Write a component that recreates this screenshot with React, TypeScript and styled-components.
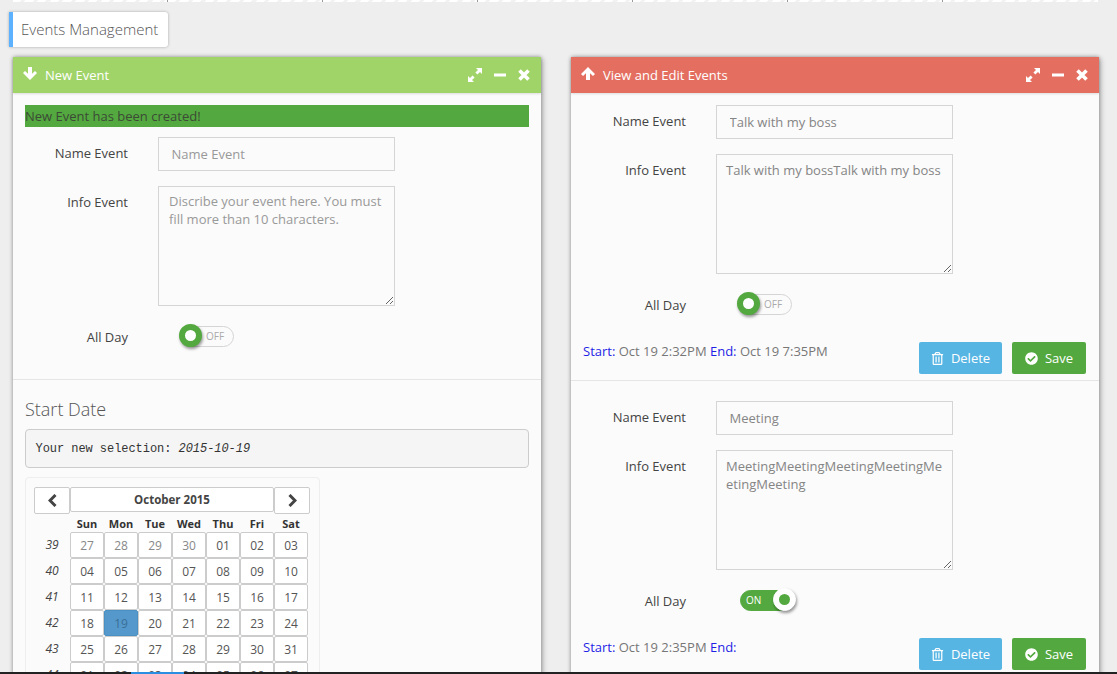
import React from "react";
import styled, { createGlobalStyle } from "styled-components";
import { FaCheckCircle, FaRegTrashAlt } from "react-icons/fa";

const GlobalStyle = createGlobalStyle`
  html, body {
    margin: 0;
    height: 100%;
    overflow: hidden;
    background: #eeeeee;
    font-family: "Open Sans", "Liberation Sans", sans-serif;
    font-size: 13px;
    color: #444444;
  }
  * {
    box-sizing: border-box;
  }
`;

const Page = styled.div`
  height: 674px;
  overflow: hidden;
  position: relative;
`;

const TopStrip = styled.div`
  display: flex;
  height: 2px;
  margin-left: 13px;
`;

const StripTab = styled.div`
  width: 155px;
  background: repeating-linear-gradient(135deg, #ffffff 0 6px, #f2f2f2 6px 9px);
  border-right: 1px solid #999999;
  &:last-child {
    border-right: none;
  }
`;

const Heading = styled.div`
  margin: 10px 0 10px 9px;
  width: 159px;
  height: 35px;
  background: #ffffff;
  border-left: 4px solid #5db2ff;
  border-radius: 0 3px 3px 0;
  box-shadow: 0 0 3px rgba(0, 0, 0, 0.3);
  padding-left: 8px;
  font-size: 15px;
  font-weight: 300;
  line-height: 35px;
  color: #555555;
`;

const Columns = styled.div`
  display: flex;
  gap: 30px;
  padding-left: 13px;
`;

const Panel = styled.section`
  width: 528px;
  height: 700px;
  background: #fbfbfb;
  box-shadow: 0 0 4px rgba(0, 0, 0, 0.35), 2px 2px 6px rgba(0, 0, 0, 0.2);
`;

const PanelHeader = styled.header<{ $color: string }>`
  height: 36px;
  background: ${(p) => p.$color};
  color: #ffffff;
  display: flex;
  align-items: center;
  padding: 0 11px 0 10px;
  font-size: 13px;
  font-weight: 400;
  box-shadow: 0 1px 2px rgba(0, 0, 0, 0.12);
`;

const HeaderIcon = styled.span`
  display: flex;
  width: 22px;
  margin-top: -3px;
`;

const HeaderTitle = styled.span`
  flex: 1;
`;

const HeaderTools = styled.div`
  display: flex;
  align-items: center;
  gap: 12px;
  svg {
    display: block;
  }
`;

const Alert = styled.div`
  margin: 12px 12px 10px;
  height: 22px;
  background: #53a93f;
  color: #3c4a36;
  line-height: 23px;
`;

const FormBlock = styled.div<{ $top?: number; $bottom?: number }>`
  padding-top: ${(p) => p.$top ?? 0}px;
  padding-bottom: ${(p) => p.$bottom ?? 0}px;
  border-bottom: 1px solid #e5e5e5;
`;

const Row = styled.div<{ $mb?: number }>`
  display: flex;
  margin-bottom: ${(p) => p.$mb ?? 15}px;
`;

const Label = styled.label<{ $pt?: number }>`
  width: 115px;
  padding-top: ${(p) => p.$pt ?? 7}px;
  text-align: right;
  line-height: 18px;
  color: #444444;
  flex-shrink: 0;
`;

const Control = styled.div<{ $ml?: number }>`
  margin-left: ${(p) => p.$ml ?? 30}px;
`;

const TextInput = styled.input`
  display: block;
  width: 237px;
  height: 34px;
  border: 1px solid #d5d5d5;
  background: #fbfbfb;
  padding: 0 12.5px;
  font: 13px "Open Sans", sans-serif;
  color: #858585;
  outline: none;
  &::placeholder {
    color: #999999;
    opacity: 1;
  }
`;

const TextArea = styled.textarea`
  display: block;
  width: 237px;
  height: 120px;
  border: 1px solid #d5d5d5;
  background: #fbfbfb;
  padding: 6px 9px;
  font: 13px/18px "Open Sans", sans-serif;
  color: #858585;
  outline: none;
  &:placeholder-shown {
    padding: 5px 8px 6px 10px;
  }
  &::placeholder {
    color: #999999;
    opacity: 1;
  }
`;

const Toggle = styled.div<{ $on?: boolean }>`
  position: relative;
  width: 52px;
  height: 21px;
  margin-top: 1px;
  border-radius: 11px;
  border: 1px solid ${(p) => (p.$on ? "#53a93f" : "#d5d5d5")};
  background: ${(p) => (p.$on ? "#53a93f" : "#fbfbfb")};
  color: ${(p) => (p.$on ? "#ffffff" : "#aaaaaa")};
  font-size: 10px;
  line-height: 19px;
  padding-left: ${(p) => (p.$on ? 5 : 23)}px;
`;

const Knob = styled.span<{ $on?: boolean }>`
  position: absolute;
  top: -3px;
  left: ${(p) => (p.$on ? 32 : -4)}px;
  width: 23px;
  height: 23px;
  border-radius: 50%;
  background: #ffffff;
  border: ${(p) => (p.$on ? "1px solid #ffffff" : "6px solid #53a93f")};
  box-shadow: 1px 2px 3px rgba(0, 0, 0, 0.4);
  &::after {
    content: "";
    display: ${(p) => (p.$on ? "block" : "none")};
    width: 11px;
    height: 11px;
    margin: 5px;
    border-radius: 50%;
    background: #53a93f;
  }
`;

const Footer = styled.div`
  display: flex;
  align-items: flex-start;
  justify-content: space-between;
  padding: 0 13px 0 12px;
`;

const Times = styled.div`
  line-height: 18px;
  color: #777777;
  font-size: 13px;
  b {
    font-weight: 400;
    color: #1f1fe6;
  }
`;

const Actions = styled.div`
  display: flex;
  gap: 10px;
`;

const ActionButton = styled.button<{ $color: string; $w: number }>`
  display: flex;
  align-items: center;
  justify-content: center;
  gap: 7px;
  width: ${(p) => p.$w}px;
  height: 32px;
  border: none;
  border-radius: 2px;
  background: ${(p) => p.$color};
  color: #ffffff;
  font: 13px "Open Sans", sans-serif;
  svg {
    font-size: 13px;
  }
`;

const DateSection = styled.div`
  padding: 18px 12px 0;
`;

const DateTitle = styled.h4`
  margin: 0 0 9px;
  font-size: 18px;
  font-weight: 300;
  line-height: 22px;
  color: #555555;
`;

const Selection = styled.pre`
  margin: 0 0 9px;
  height: 39px;
  padding: 0 9.5px;
  border: 1px solid #cccccc;
  border-radius: 4px;
  background: #f5f5f5;
  font: 12px/39px "Liberation Mono", monospace;
  letter-spacing: -0.05px;
  color: #333333;
`;

const Calendar = styled.div`
  width: 295px;
  height: 220px;
  padding: 9px 8px;
  border: 1px solid #eeeeee;
  border-radius: 4px;
`;

const CalendarGrid = styled.div`
  display: grid;
  grid-template-columns: 36px repeat(7, 34px);
  grid-template-rows: 16px;
  grid-auto-rows: 26px;
`;

const NavRow = styled.div`
  display: grid;
  grid-template-columns: 36px 204px 36px;
  align-items: start;
  height: 27px;
  margin-bottom: 2px;
`;

const NavButton = styled.button<{ $wide?: boolean }>`
  display: flex;
  align-items: center;
  justify-content: center;
  height: ${(p) => (p.$wide ? 25 : 27)}px;
  background: #ffffff;
  border: 1px solid #cccccc;
  border-radius: 2px;
  color: #444444;
  font: 700 11.5px "Open Sans", sans-serif;
  padding: 0;
`;

const WeekDay = styled.div`
  text-align: center;
  font-weight: 700;
  font-size: 11px;
  line-height: 16px;
  color: #333333;
`;

const WeekNumber = styled.div`
  text-align: center;
  font-style: italic;
  font-size: 12px;
  line-height: 26px;
  color: #444444;
`;

const Day = styled.button<{ $muted?: boolean; $active?: boolean }>`
  background: ${(p) => (p.$active ? "#5599cc" : "#ffffff")};
  border: 1px solid ${(p) => (p.$active ? "#4a90c2" : "#cccccc")};
  border-radius: 2px;
  padding: 0;
  font: 12px "Open Sans", sans-serif;
  color: ${(p) => (p.$active ? "#3a6f96" : p.$muted ? "#888888" : "#555555")};
`;

const BottomBar = styled.div`
  position: absolute;
  left: 0;
  right: 0;
  bottom: 0;
  height: 2px;
  background: #222222;
`;

const BottomBarActive = styled.div`
  position: absolute;
  left: 131px;
  width: 53px;
  height: 2px;
  background: #2a8fe0;
`;

const weeks = [
  [39, "27", "28", "29", "30", "01", "02", "03"],
  [40, "04", "05", "06", "07", "08", "09", "10"],
  [41, "11", "12", "13", "14", "15", "16", "17"],
  [42, "18", "19", "20", "21", "22", "23", "24"],
  [43, "25", "26", "27", "28", "29", "30", "31"],
  [44, "01", "02", "03", "04", "05", "06", "07"],
];

const ArrowUp = () => (
  <svg width="14" height="13" viewBox="0 0 14 13" fill="#fff">
    <path d="M7 0l7 7-2 2-3-2.8V13H5V6.2L2 9 0 7z" />
  </svg>
);

const ArrowDown = () => (
  <svg width="14" height="13" viewBox="0 0 14 13" fill="#fff">
    <path d="M7 13L0 6l2-2 3 2.8V0h4v6.8L12 4l2 2z" />
  </svg>
);

const ChevronLeft = () => (
  <svg width="9" height="13" viewBox="0 0 9 13" fill="none" stroke="#444" strokeWidth="3">
    <path d="M7.5 1L2 6.5 7.5 12" />
  </svg>
);

const ChevronRight = () => (
  <svg width="9" height="13" viewBox="0 0 9 13" fill="none" stroke="#444" strokeWidth="3">
    <path d="M1.5 1L7 6.5 1.5 12" />
  </svg>
);

function PanelTitle({ color, icon, title }: { color: string; icon: React.ReactNode; title: string }) {
  return (
    <PanelHeader $color={color}>
      <HeaderIcon>{icon}</HeaderIcon>
      <HeaderTitle>{title}</HeaderTitle>
      <HeaderTools>
        <svg width="14" height="14" viewBox="0 0 14 14" fill="#fff">
          <path d="M8 0h6v6l-2-2-2.6 2.6-2-2L10 2zM6 14H0V8l2 2 2.6-2.6 2 2L4 12z" />
        </svg>
        <svg width="12" height="12" viewBox="0 0 12 12" fill="#fff">
          <rect x="0" y="4.5" width="12" height="3" />
        </svg>
        <svg width="12" height="12" viewBox="0 0 12 12" stroke="#fff" strokeWidth="3.6">
          <path d="M1.5 1.5l9 9M10.5 1.5l-9 9" />
        </svg>
      </HeaderTools>
    </PanelHeader>
  );
}

function EventForm({ top, name, info, on, start, end }: { top: number; name: string; info: string; on?: boolean; start: string; end: string }) {
  return (
    <FormBlock $top={top} $bottom={6}>
      <Row>
        <Label>Name Event</Label>
        <Control>
          <TextInput defaultValue={name} />
        </Control>
      </Row>
      <Row $mb={19}>
        <Label>Info Event</Label>
        <Control>
          <TextArea defaultValue={info} />
        </Control>
      </Row>
      <Row $mb={27}>
        <Label $pt={3}>All Day</Label>
        <Control $ml={54}>
          <Toggle $on={on}>
            {on ? "ON" : "OFF"}
            <Knob $on={on} />
          </Toggle>
        </Control>
      </Row>
      <Footer>
        <Times>
          <b>Start:</b> {start} <b>End:</b> {end}
        </Times>
        <Actions>
          <ActionButton $color="#57b5e3" $w={83}>
            <FaRegTrashAlt />
            Delete
          </ActionButton>
          <ActionButton $color="#53a93f" $w={74}>
            <FaCheckCircle />
            Save
          </ActionButton>
        </Actions>
      </Footer>
    </FormBlock>
  );
}

export default function App() {
  return (
    <Page>
      <GlobalStyle />
      <TopStrip>
        {[0, 1, 2, 3, 4, 5, 6].map((t) => (
          <StripTab key={t} />
        ))}
      </TopStrip>
      <Heading>Events Management</Heading>
      <Columns>
        <Panel>
          <PanelTitle color="#a0d468" icon={<ArrowDown />} title="New Event" />
          <Alert>New Event has been created!</Alert>
          <FormBlock $bottom={32}>
            <Row>
              <Label>Name Event</Label>
              <Control>
                <TextInput placeholder="Name Event" />
              </Control>
            </Row>
            <Row $mb={19}>
              <Label>Info Event</Label>
              <Control>
                <TextArea placeholder="Discribe your event here. You must fill more than 10 characters." />
              </Control>
            </Row>
            <Row $mb={0}>
              <Label $pt={3}>All Day</Label>
              <Control $ml={54}>
                <Toggle>
                  OFF
                  <Knob />
                </Toggle>
              </Control>
            </Row>
          </FormBlock>
          <DateSection>
            <DateTitle>Start Date</DateTitle>
            <Selection>
              Your new selection: <em>2015-10-19</em>
            </Selection>
            <Calendar>
              <NavRow>
                <NavButton>
                  <ChevronLeft />
                </NavButton>
                <NavButton $wide>October 2015</NavButton>
                <NavButton>
                  <ChevronRight />
                </NavButton>
              </NavRow>
              <CalendarGrid>
                <WeekDay />
                {["Sun", "Mon", "Tue", "Wed", "Thu", "Fri", "Sat"].map((d) => (
                  <WeekDay key={d}>{d}</WeekDay>
                ))}
                {weeks.map((w, wi) =>
                  w.map((c, i) =>
                    i === 0 ? (
                      <WeekNumber key={`n${c}`}>{c}</WeekNumber>
                    ) : (
                      <Day key={`${wi}-${i}`} $muted={wi === 0 && i < 5} $active={c === "19"}>
                        {c}
                      </Day>
                    )
                  )
                )}
              </CalendarGrid>
            </Calendar>
          </DateSection>
        </Panel>
        <Panel>
          <PanelTitle color="#e46f61" icon={<ArrowUp />} title="View and Edit Events" />
          <EventForm top={12} name="Talk with my boss" info="Talk with my bossTalk with my boss" start="Oct 19 2:32PM" end="Oct 19 7:35PM" />
          <EventForm top={20} name="Meeting" info="MeetingMeetingMeetingMeetingMeetingMeeting" on start="Oct 19 2:35PM" end="" />
        </Panel>
      </Columns>
      <BottomBar>
        <BottomBarActive />
      </BottomBar>
    </Page>
  );
}
